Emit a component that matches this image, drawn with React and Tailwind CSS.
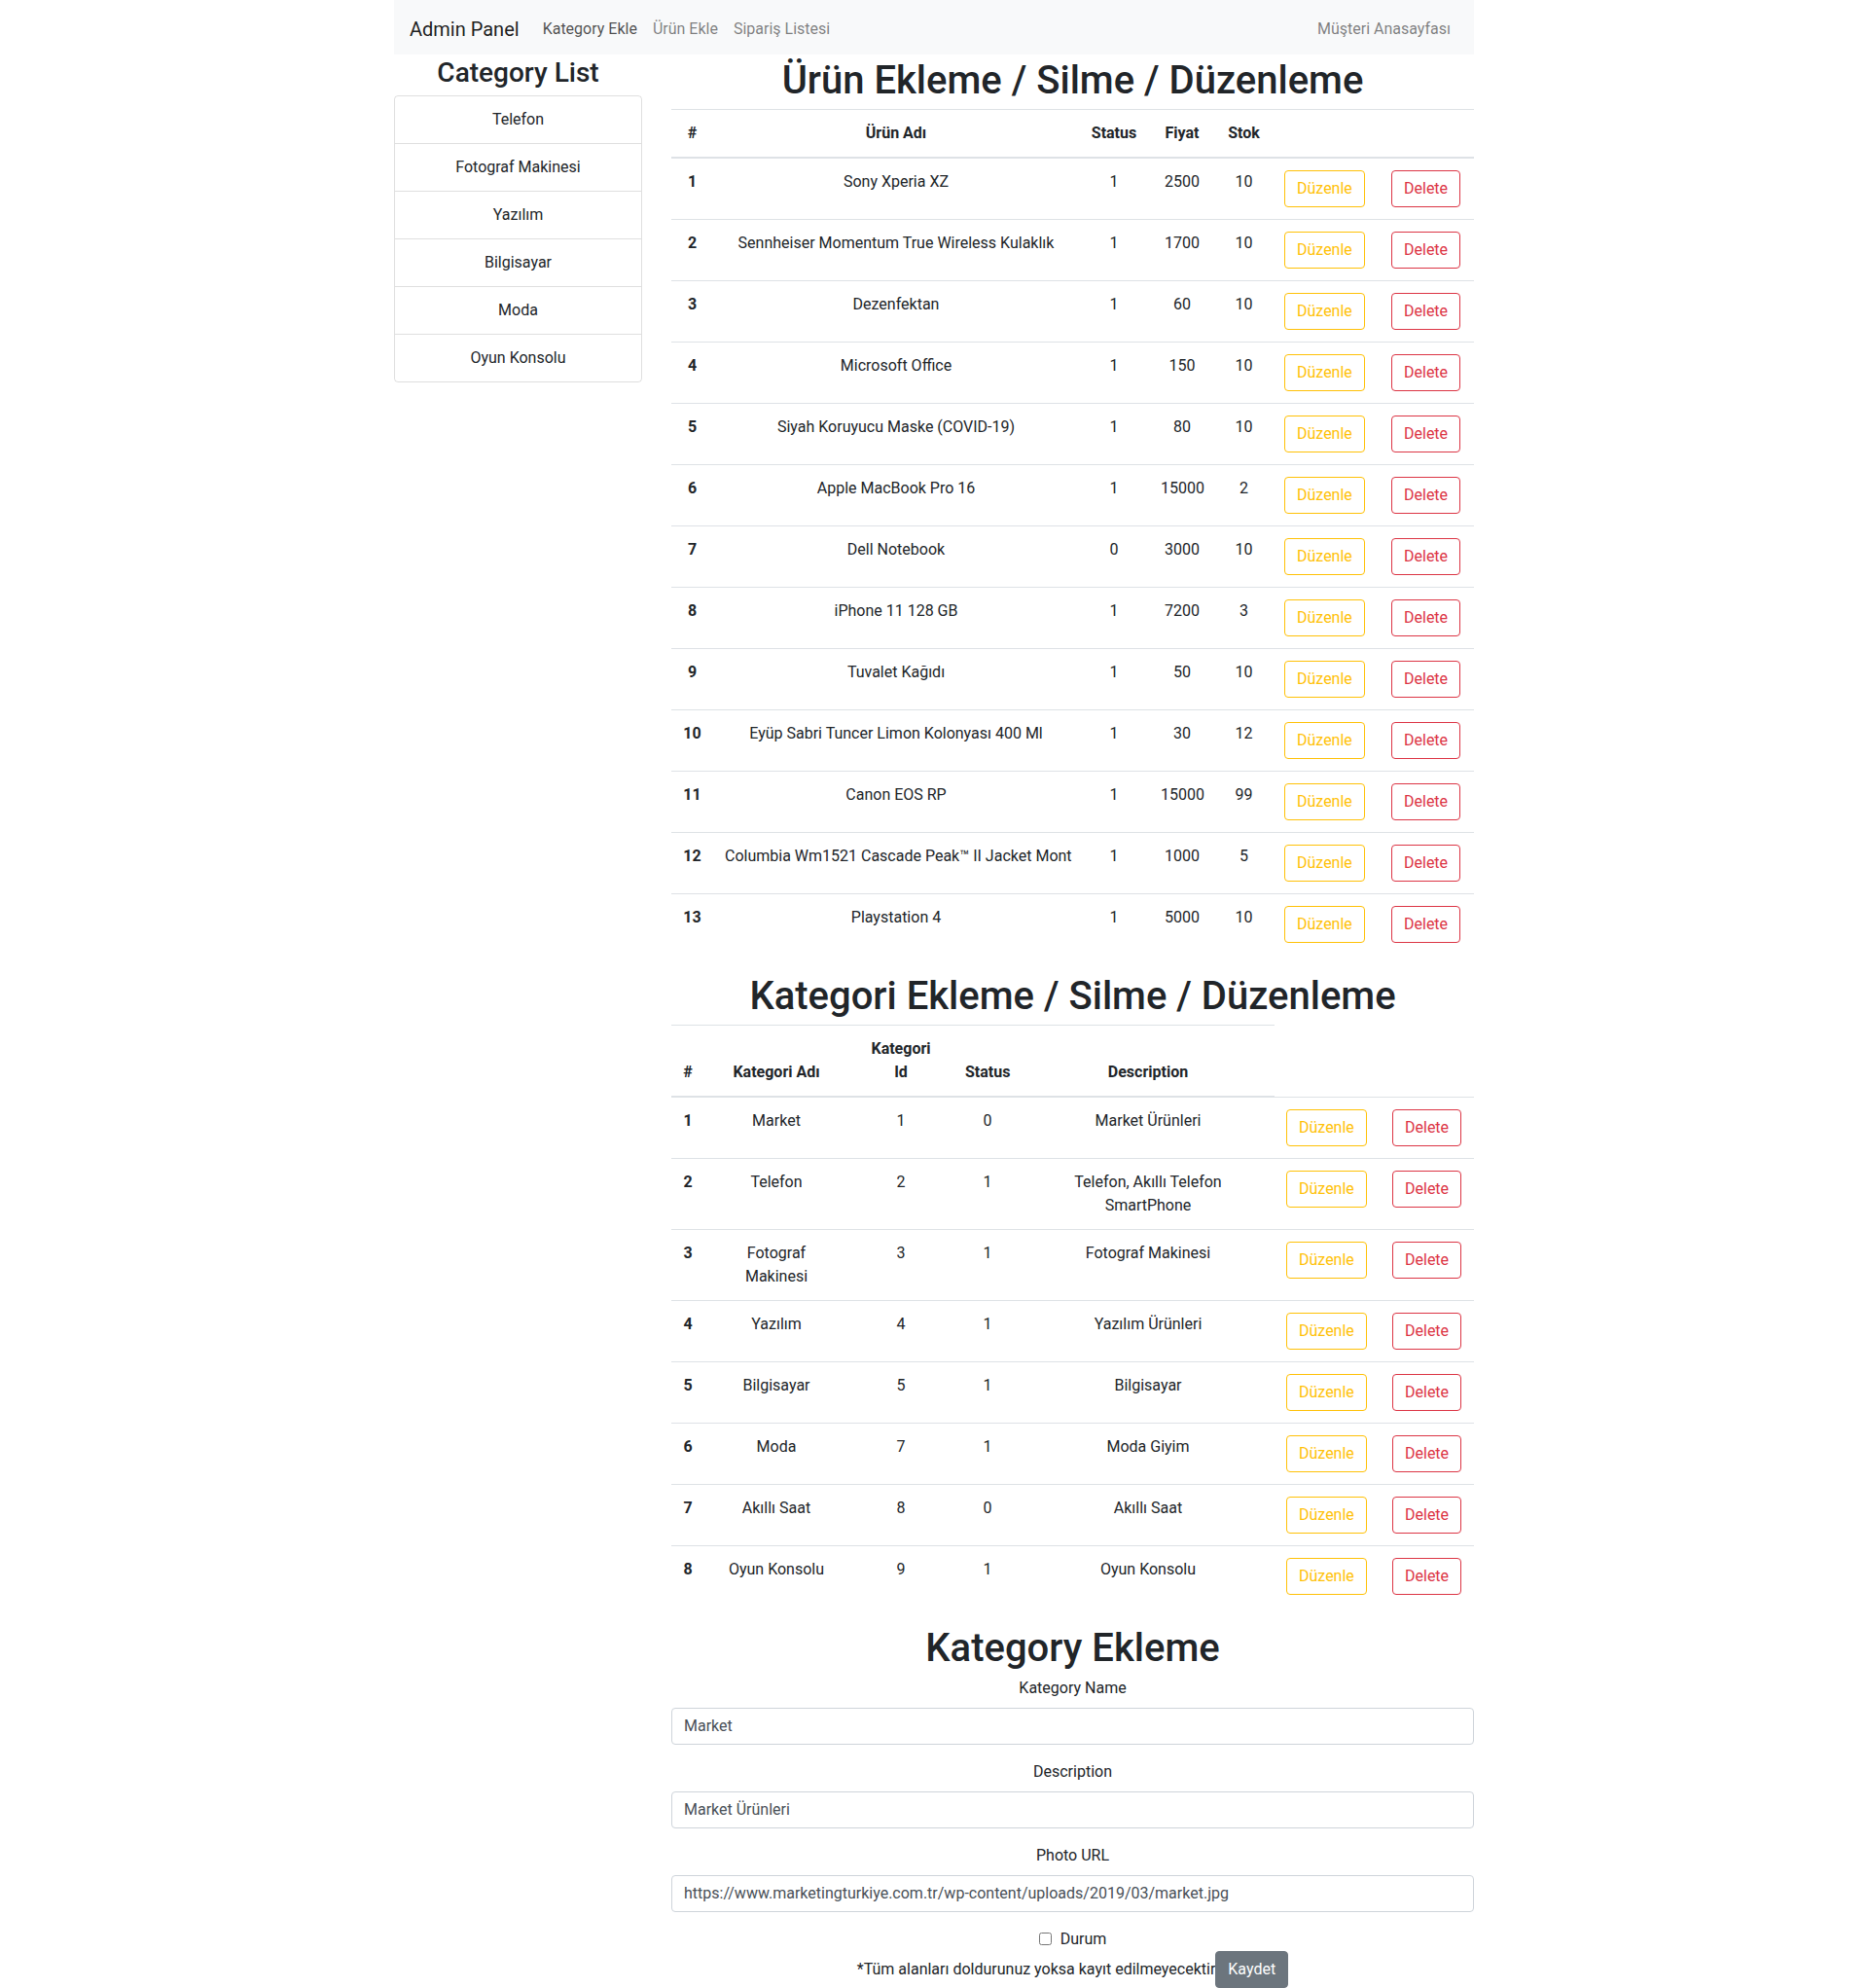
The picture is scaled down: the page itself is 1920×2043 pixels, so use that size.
import React from "react";

const products = [
  [1, "Sony Xperia XZ", 1, 2500, 10],
  [2, "Sennheiser Momentum True Wireless Kulaklık", 1, 1700, 10],
  [3, "Dezenfektan", 1, 60, 10],
  [4, "Microsoft Office", 1, 150, 10],
  [5, "Siyah Koruyucu Maske (COVID-19)", 1, 80, 10],
  [6, "Apple MacBook Pro 16", 1, 15000, 2],
  [7, "Dell Notebook", 0, 3000, 10],
  [8, "iPhone 11 128 GB", 1, 7200, 3],
  [9, "Tuvalet Kağıdı", 1, 50, 10],
  [10, "Eyüp Sabri Tuncer Limon Kolonyası 400 Ml", 1, 30, 12],
  [11, "Canon EOS RP", 1, 15000, 99],
  [12, "Columbia Wm1521 Cascade Peak™ II Jacket Mont", 1, 1000, 5],
  [13, "Playstation 4", 1, 5000, 10],
];

const categories = [
  [1, ["Market"], 1, 0, ["Market Ürünleri"]],
  [2, ["Telefon"], 2, 1, ["Telefon, Akıllı Telefon", "SmartPhone"]],
  [3, ["Fotograf", "Makinesi"], 3, 1, ["Fotograf Makinesi"]],
  [4, ["Yazılım"], 4, 1, ["Yazılım Ürünleri"]],
  [5, ["Bilgisayar"], 5, 1, ["Bilgisayar"]],
  [6, ["Moda"], 7, 1, ["Moda Giyim"]],
  [7, ["Akıllı Saat"], 8, 0, ["Akıllı Saat"]],
  [8, ["Oyun Konsolu"], 9, 1, ["Oyun Konsolu"]],
];

const sideList = ["Telefon", "Fotograf Makinesi", "Yazılım", "Bilgisayar", "Moda", "Oyun Konsolu"];

const td = "border-t border-[#dee2e6] p-3 align-top text-center whitespace-nowrap";
const th = "border-t border-b-2 border-[#dee2e6] p-3 align-bottom text-center font-bold";
const h1 = "text-[40px] font-medium pt-[6px] leading-[42px] text-center mb-2";
const input =
  "block w-full h-[38px] px-3 py-1.5 border border-[#ced4da] rounded text-[#495057] bg-white";

function Lines({ items }) {
  return items.map((t, i) => (
    <React.Fragment key={i}>
      {i > 0 && <br />}
      {t}
    </React.Fragment>
  ));
}

function Buttons() {
  return (
    <>
      <td className={td + " text-left"}>
        <button className="inline-block align-top border border-[#ffc107] text-[#ffc107] rounded px-3 py-1.5 leading-6">
          Düzenle
        </button>
      </td>
      <td className={td + " text-left"}>
        <button className="inline-block align-top border border-[#dc3545] text-[#dc3545] rounded px-3 py-1.5 leading-6">
          Delete
        </button>
      </td>
    </>
  );
}

export default function App() {
  return (
    <div className="font-[family-name:Roboto,sans-serif] text-[#212529] text-base leading-6 bg-white min-h-screen">
      <div className="w-[1140px] mx-auto px-[15px]">
        <nav className="bg-[#f8f9fa] h-14 px-4 pt-[3px] flex items-center">
          <span className="text-xl text-black/90 mr-4 leading-[30px]">Admin Panel</span>
          <a className="px-2 text-black/70">Kategory Ekle</a>
          <a className="px-2 text-black/50">Ürün Ekle</a>
          <a className="px-2 text-black/50">Sipariş Listesi</a>
          <a className="px-2 text-black/50 ml-auto">Müşteri Anasayfası</a>
        </nav>

        <div className="flex -mx-[15px]">
          <div className="w-[285px] px-[15px]">
            <h3 className="text-[28px] font-medium pt-[3px] leading-[31px] text-center mb-2">Category List</h3>
            <ul className="border border-black/[.125] rounded">
              {sideList.map((c, i) => (
                <li
                  key={c}
                  className={
                    "px-5 py-3 text-center " + (i > 0 ? "border-t border-black/[.125]" : "")
                  }
                >
                  {c}
                </li>
              ))}
            </ul>
          </div>

          <div className="w-[855px] px-[15px]">
            <h1 className={h1}>Ürün Ekleme / Silme / Düzenleme</h1>
            <table className="w-full border-collapse table-fixed mb-4">
              <thead>
                <tr>
                  <th className={th + " w-[43px]"}>#</th>
                  <th className={th + " w-[376px]"}>Ürün Adı</th>
                  <th className={th + " w-[72px]"}>Status</th>
                  <th className={th + " w-[68px]"}>Fiyat</th>
                  <th className={th + " w-[59px]"}>Stok</th>
                  <th className={th + " w-[110px]"}></th>
                  <th className={th}></th>
                </tr>
              </thead>
              <tbody>
                {products.map((p) => (
                  <tr key={p[0]}>
                    <td className={td + " font-bold"}>{p[0]}</td>
                    <td className={td}>{p[1]}</td>
                    <td className={td}>{p[2]}</td>
                    <td className={td}>{p[3]}</td>
                    <td className={td}>{p[4]}</td>
                    <Buttons />
                  </tr>
                ))}
              </tbody>
            </table>

            <h1 className={h1}>Kategori Ekleme / Silme / Düzenleme</h1>
            <table className="w-full border-collapse table-fixed mb-4">
              <thead>
                <tr>
                  <th className={th + " w-[34px]"}>#</th>
                  <th className={th + " w-[148px]"}>Kategori Adı</th>
                  <th className={th + " w-[108px]"}>
                    Kategori
                    <br />
                    Id
                  </th>
                  <th className={th + " w-[70px]"}>Status</th>
                  <th className={th + " w-[260px]"}>Description</th>
                  <th className="w-[109px]"></th>
                  <th></th>
                </tr>
              </thead>
              <tbody>
                {categories.map((c) => (
                  <tr key={c[0]}>
                    <td className={td + " font-bold"}>{c[0]}</td>
                    <td className={td}>
                      <Lines items={c[1]} />
                    </td>
                    <td className={td}>{c[2]}</td>
                    <td className={td}>{c[3]}</td>
                    <td className={td}>
                      <Lines items={c[4]} />
                    </td>
                    <Buttons />
                  </tr>
                ))}
              </tbody>
            </table>

            <h1 className={h1}>Kategory Ekleme</h1>
            <form className="text-center">
              <div className="mb-4">
                <label className="block mb-2">Kategory Name</label>
                <input defaultValue="Market" className={input} />
              </div>
              <div className="mb-4">
                <label className="block mb-2">Description</label>
                <input defaultValue="Market Ürünleri" className={input} />
              </div>
              <div className="mb-4">
                <label className="block mb-2">Photo URL</label>
                <input
                  defaultValue="https://www.marketingturkiye.com.tr/wp-content/uploads/2019/03/market.jpg"
                  className={input}
                />
              </div>
              <div className="flex justify-center items-center h-6">
                <input type="checkbox" className="w-[13px] h-[13px] mr-[9px]" />
                <label>Durum</label>
              </div>
              <div className="flex justify-center items-baseline">
                <span>*Tüm alanları doldurunuz yoksa kayıt edilmeyecektir</span>
                <button
                  type="button"
                  className="bg-[#6c757d] text-white rounded px-3 py-1.5 leading-6 border border-[#6c757d]"
                >
                  Kaydet
                </button>
              </div>
            </form>
          </div>
        </div>
      </div>
    </div>
  );
}
